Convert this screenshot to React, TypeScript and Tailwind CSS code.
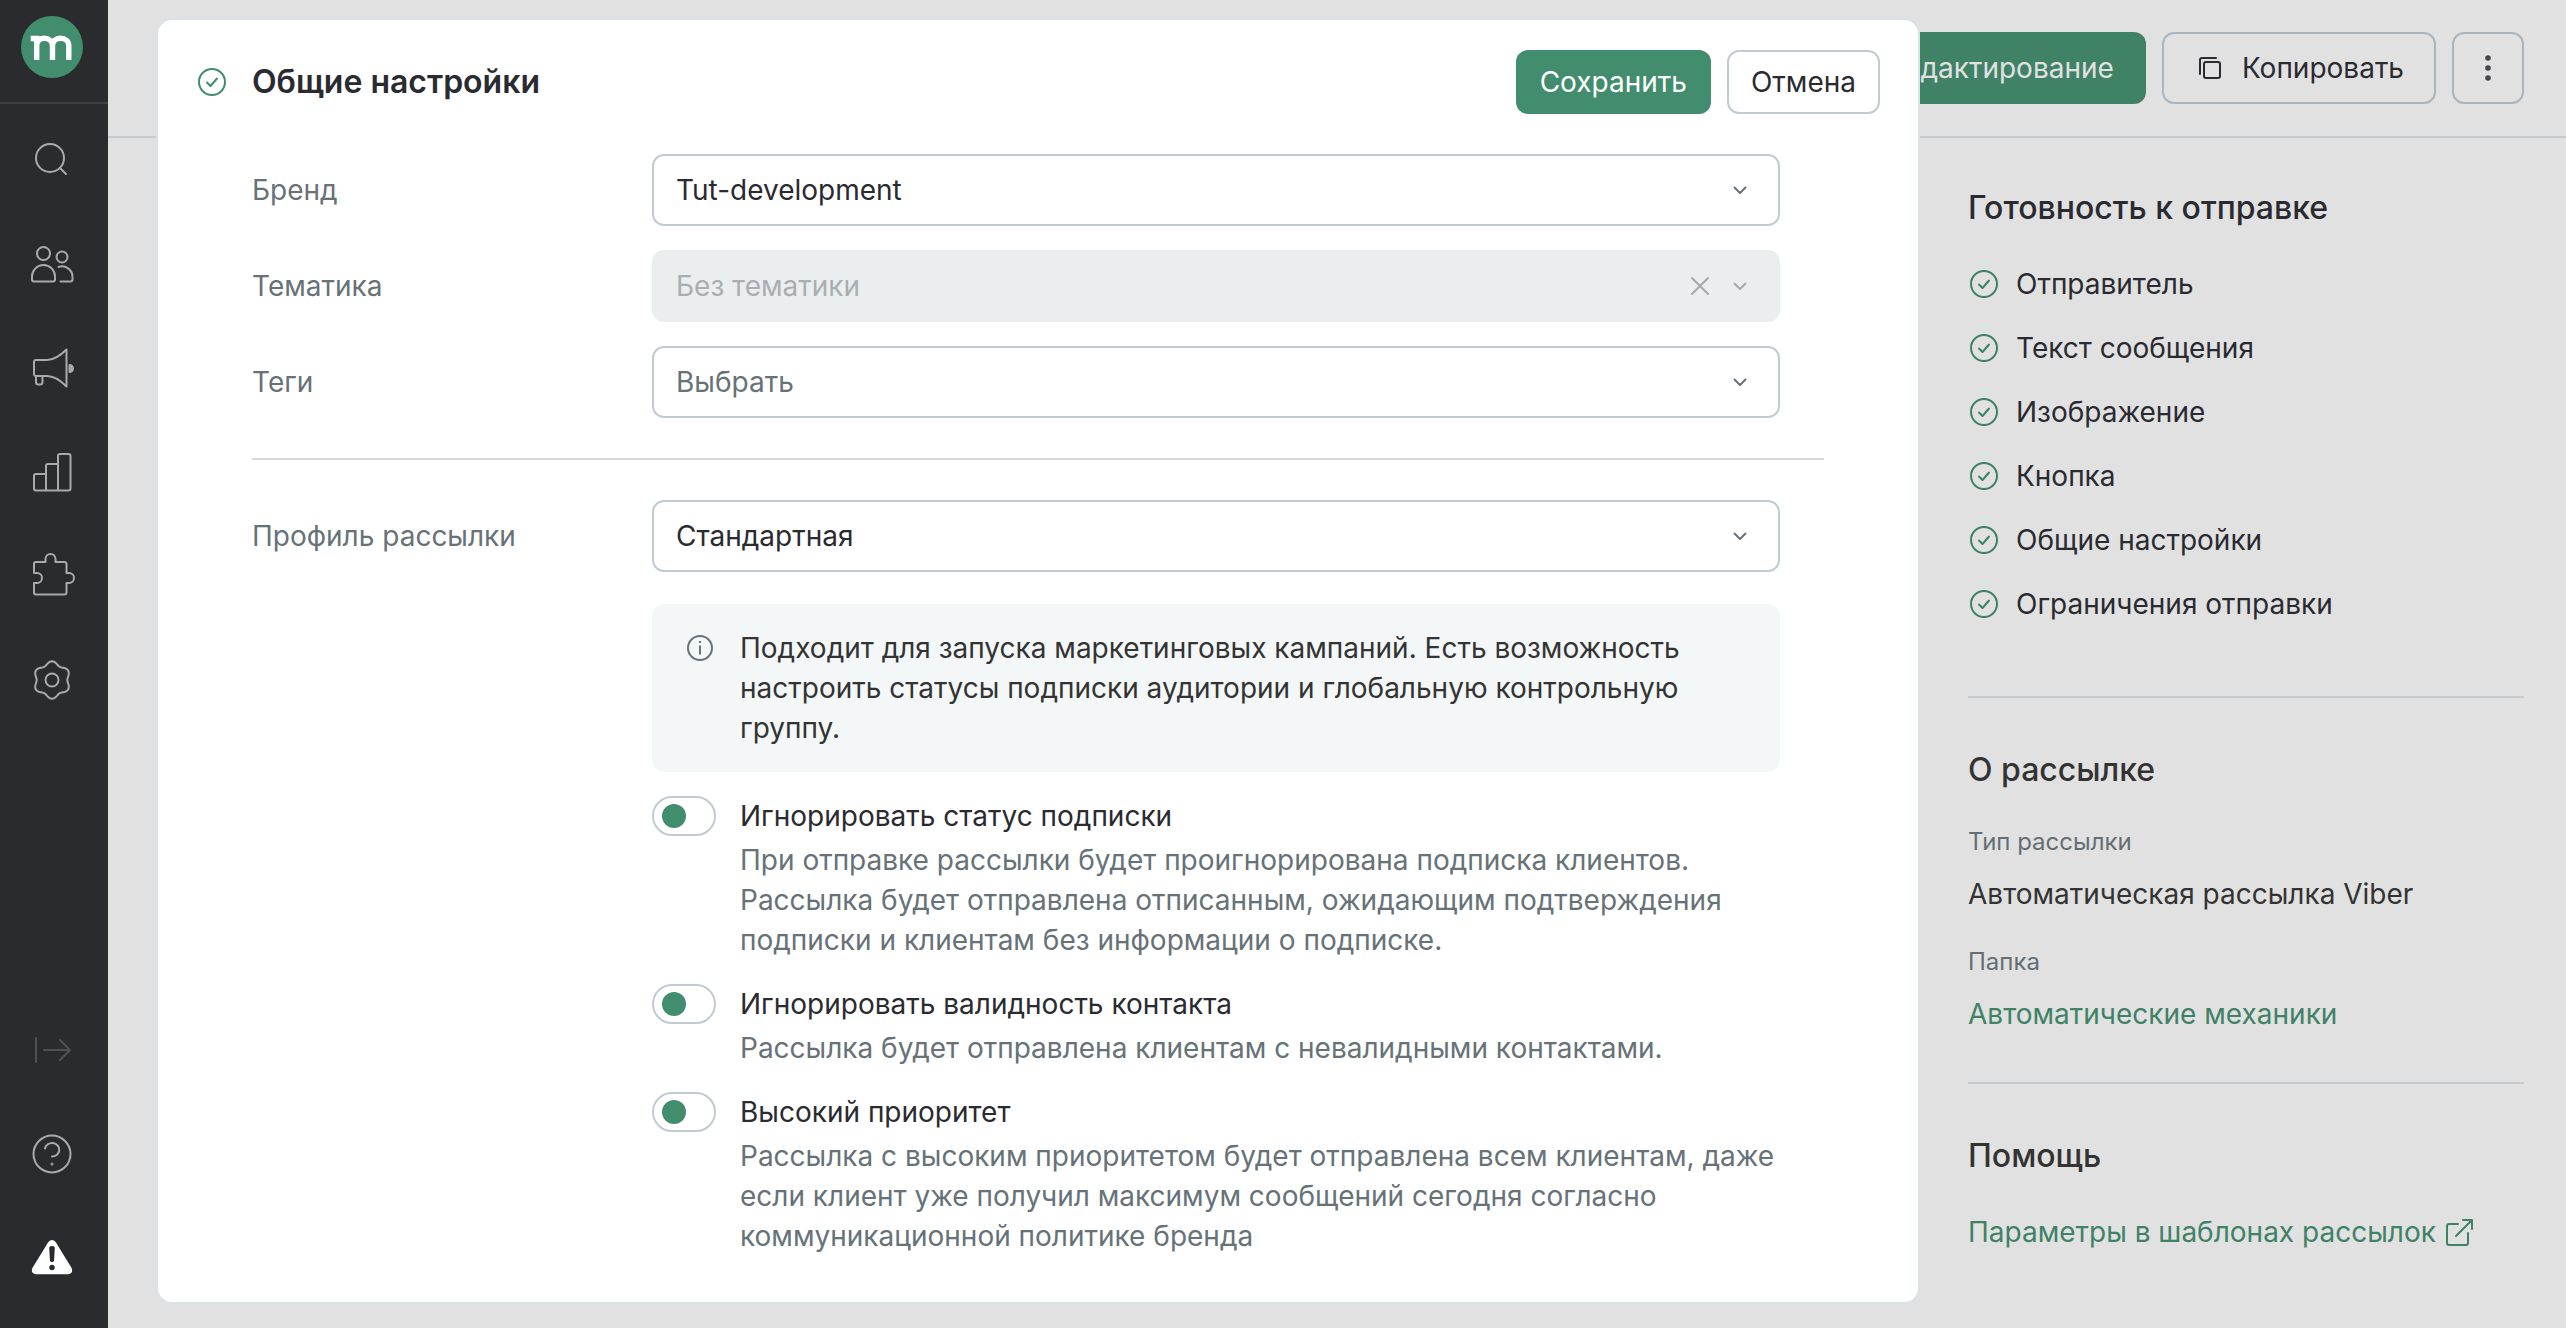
import React from "react";

type IconProps = { className?: string };

function CheckCircle({ className = "" }: IconProps) {
  return (
    <svg viewBox="0 0 32 32" fill="none" stroke="currentColor" strokeWidth="2" strokeLinecap="round" strokeLinejoin="round" className={`size-8 shrink-0 ${className}`} aria-hidden="true">
      <circle cx="16" cy="16" r="13" />
      <path d="M11 16.500l3.500 3.500 6.500-7.500" />
    </svg>
  );
}

function Chevron({ className = "" }: IconProps) {
  return (
    <svg viewBox="0 0 16 16" fill="none" stroke="currentColor" strokeWidth="2" strokeLinecap="round" strokeLinejoin="round" className={`size-4 ${className}`} aria-hidden="true">
      <path d="M2.500 5.500L8 11l5.500-5.500" />
    </svg>
  );
}

function NavIcon({ children }: { children: React.ReactNode }) {
  return (
    <svg viewBox="0 0 48 48" fill="none" stroke="currentColor" strokeWidth="2" strokeLinecap="round" strokeLinejoin="round" className="size-12" aria-hidden="true">
      {children}
    </svg>
  );
}

// Six-lobed gear outline, one lobe pointing up.
const gearPoints = Array.from({ length: 120 }, (_, i) => {
  const a = (i / 120) * Math.PI * 2;
  const r = 17 + 1.7 * Math.cos(6 * a);
  return `${(24 + r * Math.sin(a)).toFixed(2)},${(24 - r * Math.cos(a)).toFixed(2)}`;
}).join(" ");

const topNav = [
  {
    label: "Поиск",
    icon: (
      <>
        <circle cx="22" cy="22" r="14" />
        <path d="M32 32l6 6" />
      </>
    ),
  },
  {
    label: "Клиенты",
    icon: (
      <>
        <circle cx="15.500" cy="13.500" r="6.500" />
        <circle cx="34" cy="17" r="5.500" />
        <path d="M4 36.500a11.500 11.500 0 0 1 23 0v3q0 2-2 2H6q-2 0-2-2z" />
        <path d="M30.500 27a10.500 10.500 0 0 1 14 10v2.500q0 2-2 2h-10" />
      </>
    ),
  },
  {
    label: "Кампании",
    icon: (
      <>
        <path d="M6 18q0-2 2-2h11c8 0 14-5 19.500-10.500v37C33 37 27 32 19 32H8q-2 0-2-2z" />
        <path d="M8 32v6q0 2.500 2.500 2.500h1.500q2.500 0 2.500-2.500v-6" />
        <path d="M41.500 21a3.500 3.500 0 0 1 0 7z" fill="currentColor" />
      </>
    ),
  },
  {
    label: "Отчеты",
    icon: <path d="M18 42.500V18q0-2 2-2h10M18 26H8q-2 0-2 2v12.500q0 2 2 2h32.500q2 0 2-2V8q0-2-2-2H32q-2 0-2 2v34.500" />,
  },
  {
    label: "Интеграции",
    icon: (
      <path d="M8 10h9.500V7a5 5 0 0 1 10 0v3h9q2 0 2 2v9h2.500a5 5 0 0 1 0 10h-2.500v9.500q0 2-2 2H8q-2 0-2-2V31h3a5 5 0 0 0 0-10H6v-9q0-2 2-2z" />
    ),
  },
  {
    label: "Настройки",
    icon: (
      <>
        <circle cx="24" cy="24" r="6.500" />
        <polygon points={gearPoints} />
      </>
    ),
  },
];

const readiness = ["Отправитель", "Текст сообщения", "Изображение", "Кнопка", "Общие настройки", "Ограничения отправки"];

const switches = [
  {
    id: "ignore-subscription",
    title: "Игнорировать статус подписки",
    text: "При отправке рассылки будет проигнорирована подписка клиентов. Рассылка будет отправлена отписанным, ожидающим подтверждения подписки и клиентам без информации о подписке.",
  },
  {
    id: "ignore-validity",
    title: "Игнорировать валидность контакта",
    text: "Рассылка будет отправлена клиентам с невалидными контактами.",
  },
  {
    id: "high-priority",
    title: "Высокий приоритет",
    text: "Рассылка с высоким приоритетом будет отправлена всем клиентам, даже если клиент уже получил максимум сообщений сегодня согласно коммуникационной политике бренда",
  },
];

function Sidebar() {
  const item = "flex h-[104px] w-[104px] items-center justify-center";
  return (
    <nav aria-label="Главное меню" className="flex w-[108px] shrink-0 flex-col bg-[#2a2b2f] text-[#a9aaac]">
      <div className="mb-1 flex h-[104px] justify-center border-b-2 border-[#3e3f43] pt-4 pr-1">
        <a href="#home" aria-label="Главная">
          <svg viewBox="0 0 62 62" className="size-[62px]" aria-hidden="true">
            <circle cx="31" cy="31" r="31" fill="#418d6d" />
            <path
              d="M9.700 22.500h6V44M15.700 30c0-5 3-7.800 7.500-7.800s8.300 2.800 8.300 7.800v14M31.500 30c0-5 3.300-7.800 8-7.800s8.300 2.800 8.300 7.800v14"
              fill="none"
              stroke="#fff"
              strokeWidth="5.400"
            />
          </svg>
        </a>
      </div>
      {topNav.map((n) => (
        <button key={n.label} type="button" aria-label={n.label} className={item}>
          <NavIcon>{n.icon}</NavIcon>
        </button>
      ))}
      <div className="mt-auto pb-[18px]">
        <button type="button" aria-label="Развернуть меню" className={`${item} text-[#505155]`}>
          <NavIcon>
            <path d="M8 12v24M16 24h26M32 14l10 10-10 10" />
          </NavIcon>
        </button>
        <button type="button" aria-label="Справка" className={item}>
          <NavIcon>
            <circle cx="24" cy="24" r="18.500" />
            <path d="M17 18.500A7.200 6.800 0 1 1 24 26.500" />
            <circle cx="24" cy="34" r="0.500" />
          </NavIcon>
        </button>
        <button type="button" aria-label="Предупреждения" className={`${item} text-white`}>
          <svg viewBox="0 0 48 48" className="size-12" aria-hidden="true">
            <path d="M20.200 8.300q3.800-4.600 7.600 0L43.300 33.500q2.700 6-3.300 6.700H8q-6-.7-3.300-6.700z" fill="currentColor" />
            <path d="M21.200 14q0-2 2.800-2t2.800 2l-.8 12.500q-.2 1.500-2 1.500t-2-1.500z" fill="#2a2b2f" />
            <circle cx="24" cy="33.500" r="2.700" fill="#2a2b2f" />
          </svg>
        </button>
      </div>
    </nav>
  );
}

function PageHeader() {
  return (
    <header className="flex justify-end gap-4 border-b-2 border-[#c5cbcf] py-8 pr-[42px]">
      <button type="button" className="h-18 rounded-xl bg-[#3f8266] px-8 text-[#e1e1e1]">
        Редактирование
      </button>
      <button type="button" className="flex h-18 items-center gap-4 rounded-xl border-2 border-[#aab5be] px-[30px]">
        <svg viewBox="0 0 32 32" fill="none" stroke="currentColor" strokeWidth="2" strokeLinecap="round" strokeLinejoin="round" className="size-8" aria-hidden="true">
          <rect x="10" y="10" width="16" height="16" rx="2" />
          <path d="M6 22V8q0-2 2-2h14" />
        </svg>
        Копировать
      </button>
      <button type="button" aria-label="Еще" className="flex size-18 items-center justify-center rounded-xl border-2 border-[#aab5be]">
        <svg viewBox="0 0 32 32" fill="#44464a" className="size-8" aria-hidden="true">
          <circle cx="16" cy="6" r="2.800" />
          <circle cx="16" cy="16" r="2.800" />
          <circle cx="16" cy="26" r="2.800" />
        </svg>
      </button>
    </header>
  );
}

function Summary() {
  return (
    <aside className="ml-auto w-[598px] pr-[42px]">
      <section className="border-b-2 border-[#c5cbcf] pt-[50px] pb-18">
        <h2 className="text-[32px] leading-10 font-medium">Готовность к отправке</h2>
        <ul className="mt-9 flex flex-col gap-6">
          {readiness.map((r) => (
            <li key={r} className="flex items-center gap-4">
              <CheckCircle className="text-[#3f8266]" />
              {r}
            </li>
          ))}
        </ul>
      </section>
      <section className="border-b-2 border-[#c5cbcf] pt-[52px] pb-12 text-[#333]">
        <h2 className="text-[32px] leading-10 font-medium">О рассылке</h2>
        <dl className="mt-9">
          <dt className="text-2xl text-[#646e75]">Тип рассылки</dt>
          <dd className="mt-4">Автоматическая рассылка Viber</dd>
          <dt className="mt-8 text-2xl text-[#646e75]">Папка</dt>
          <dd className="mt-4">
            <a href="#folder" className="text-[#3f8266]">
              Автоматические механики
            </a>
          </dd>
        </dl>
      </section>
      <section className="pt-[52px]">
        <h2 className="text-[32px] leading-10 font-medium text-[#333]">Помощь</h2>
        <a href="#help" className="mt-9 flex items-center gap-1.5 text-[#3f8266]">
          Параметры в шаблонах рассылок
          <svg viewBox="0 0 32 32" fill="none" stroke="currentColor" strokeWidth="2" strokeLinecap="round" strokeLinejoin="round" className="size-8" aria-hidden="true">
            <path d="M16 8H7Q5 8 5 10v17q0 2 2 2h17q2 0 2-2V17M14 20L29.500 4.500M21 4h9v9" />
          </svg>
        </a>
      </section>
    </aside>
  );
}

function Field({ id, label, value, muted, disabled }: { id: string; label: string; value: string; muted?: boolean; disabled?: boolean }) {
  const tone = disabled
    ? "border-[#eaeeef] bg-[#eaeeef] text-[#a9aeb0]"
    : muted
      ? "border-[#c1cbd4] bg-white text-[#667278]"
      : "border-[#c1cbd4] bg-white text-[#2a2a31]";
  return (
    <div className="grid grid-cols-[400px_1fr] items-center pr-11">
      <label htmlFor={id} className="text-[#667278]">
        {label}
      </label>
      <div className="relative">
        <select id={id} disabled={disabled} className={`h-18 w-full appearance-none rounded-xl border-2 px-[22px] opacity-100 ${tone}`}>
          <option>{value}</option>
        </select>
        {disabled && (
          <button type="button" aria-label="Очистить" disabled className="absolute inset-y-0 right-[70px] text-[#a5a9aa]">
            <svg viewBox="0 0 20 20" fill="none" stroke="currentColor" strokeWidth="2" strokeLinecap="round" className="size-5" aria-hidden="true">
              <path d="M2 2l16 16M18 2L2 18" />
            </svg>
          </button>
        )}
        <div className={`pointer-events-none absolute inset-y-0 right-8 flex items-center ${disabled ? "text-[#a5a9aa]" : "text-[#667278]"}`}>
          <Chevron />
        </div>
      </div>
    </div>
  );
}

function SettingsDialog() {
  return (
    <div role="dialog" aria-labelledby="dialog-title" className="absolute top-[18px] right-[646px] left-12 rounded-2xl border-2 border-[#dbe2e6] bg-white pt-[30px] pb-[46px]">
      <div className="flex items-center px-[38px]">
        <CheckCircle className="text-[#418d6d]" />
        <h1 id="dialog-title" className="ml-6 text-[32px] leading-10 font-semibold">
          Общие настройки
        </h1>
        <button type="button" className="ml-auto h-16 rounded-xl bg-[#418d6d] px-6 text-white">
          Сохранить
        </button>
        <button type="button" className="ml-4 h-16 rounded-xl border-2 border-[#c1cbd4] px-[22px]">
          Отмена
        </button>
      </div>
      <form className="px-[94px] pt-10">
        <div className="flex flex-col gap-6 border-b-2 border-[#d8dbdd] pb-10">
          <Field id="brand" label="Бренд" value="Tut-development" />
          <Field id="topic" label="Тематика" value="Без тематики" disabled />
          <Field id="tags" label="Теги" value="Выбрать" muted />
        </div>
        <div className="pt-10">
          <Field id="profile" label="Профиль рассылки" value="Стандартная" />
          <div className="mt-8 mr-11 ml-[400px] flex flex-col gap-6">
            <div className="flex gap-6 rounded-xl bg-[#f4f7f8] px-8 py-6 text-[#333]">
              <svg viewBox="0 0 32 32" fill="none" stroke="#667278" strokeWidth="2" className="mt-1 size-8 shrink-0" aria-hidden="true">
                <circle cx="16" cy="16" r="12" />
                <path d="M16 13.500V22.500M16 9v2" />
              </svg>
              <p>Подходит для запуска маркетинговых кампаний. Есть возможность настроить статусы подписки аудитории и глобальную контрольную группу.</p>
            </div>
            {switches.map((s) => (
              <div key={s.id} className="flex gap-6">
                <input
                  id={s.id}
                  type="checkbox"
                  role="switch"
                  className="flex h-10 w-16 shrink-0 appearance-none items-center rounded-full border-2 border-[#c1cbd4] bg-white pl-2 before:size-6 before:rounded-full before:bg-[#418d6d] before:content-['']"
                />
                <div>
                  <label htmlFor={s.id}>{s.title}</label>
                  <p className="mt-1 text-[#667278]">{s.text}</p>
                </div>
              </div>
            ))}
          </div>
        </div>
      </form>
    </div>
  );
}

export default function App() {
  return (
    <div className="flex min-h-screen bg-[#e1e1e1] font-['Inter',sans-serif] text-[28px] leading-10 text-[#2a2a31]">
      <Sidebar />
      <main className="relative min-w-0 flex-1">
        <PageHeader />
        <Summary />
        <SettingsDialog />
      </main>
    </div>
  );
}
